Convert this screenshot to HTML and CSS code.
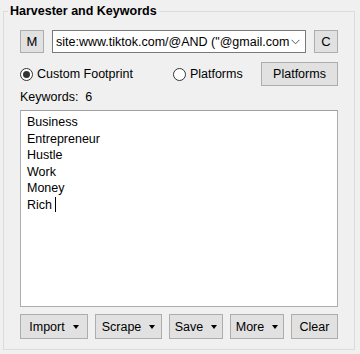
FILE: index.html
```html
<!DOCTYPE html>
<html lang="en">
<head>
  <meta charset="UTF-8">
  <title>Harvester and Keywords</title>
  <link rel="stylesheet" href="styles.css">
</head>
<body>

  <fieldset class="group">
    <legend>Harvester and Keywords</legend>
    <div class="group-body">

      <div class="row query-row">
        <button class="btn small">M</button>
        <div class="combo">
          <span class="combo-text">site:www.tiktok.com/@AND ("@gmail.com"</span>
          <svg class="chevron" width="9" height="6" viewBox="0 0 9 6">
            <path d="M0.5 0.8 L4.5 4.8 L8.5 0.8" fill="none" stroke="#555" stroke-width="1"/>
          </svg>
        </div>
        <button class="btn small">C</button>
      </div>

      <div class="row mode-row">
        <label class="radio checked"><span class="dot"></span>Custom Footprint</label>
        <label class="radio second"><span class="dot"></span>Platforms</label>
        <button class="btn platforms">Platforms</button>
      </div>

      <div class="count">Keywords:&nbsp; 6</div>

      <div class="keywords">
        <div>Business</div>
        <div>Entrepreneur</div>
        <div>Hustle</div>
        <div>Work</div>
        <div>Money</div>
        <div>Rich <span class="caret"></span></div>
      </div>

      <div class="row actions">
        <button class="btn drop w-import">Import <span class="tri"></span></button>
        <button class="btn drop w-scrape">Scrape <span class="tri"></span></button>
        <button class="btn drop w-save">Save <span class="tri"></span></button>
        <button class="btn drop w-more">More <span class="tri"></span></button>
        <button class="btn w-clear">Clear</button>
      </div>

    </div>
  </fieldset>

</body>
</html>
```

FILE: styles.css
```css
body {
  margin: 0;
  background: #f0f0f0;
  font-family: "Liberation Sans", Arial, sans-serif;
  font-size: 12.5px;
  color: #000;
}
.group {
  margin: 4px 5px 0 3px;
  padding: 0;
  border: 1px solid #dcdcdc;
  min-width: 0;
}
.group legend {
  font-weight: bold;
  font-size: 12.5px;
  line-height: 14px;
  margin-left: 4px;
  padding: 0 2px;
}
.group-body {
  padding: 12px 16px 10px 16px;
}
.row {
  display: flex;
  align-items: center;
}
.btn {
  font-family: inherit;
  font-size: 12.5px;
  color: #000;
  background: #e1e1e1;
  border: 1px solid #adadad;
  padding: 0;
  margin: 0;
  box-sizing: border-box;
}
.query-row {
  gap: 8px;
  height: 23px;
}
.btn.small {
  width: 24px;
  height: 23px;
  font-size: 13px;
}
.combo {
  flex: 1;
  min-width: 0;
  height: 23px;
  box-sizing: border-box;
  background: #fff;
  border: 1px solid #7a7a7a;
  display: flex;
  align-items: center;
  padding: 0 5px 0 3px;
}
.combo-text {
  flex: 1;
  min-width: 0;
  white-space: nowrap;
  overflow: hidden;
}
.chevron {
  flex: none;
  margin-left: 2px;
}
.mode-row {
  margin-top: 9px;
  height: 24px;
}
.radio {
  display: flex;
  align-items: center;
  gap: 4px;
}
.radio.second {
  margin-left: 40px;
}
.dot {
  width: 13px;
  height: 13px;
  box-sizing: border-box;
  border: 1px solid #333;
  border-radius: 50%;
  background: #fff;
  position: relative;
}
.radio.checked .dot::after {
  content: "";
  position: absolute;
  left: 2px; top: 2px;
  width: 7px; height: 7px;
  border-radius: 50%;
  background: #333;
}
.btn.platforms {
  margin-left: auto;
  width: 77px;
  height: 24px;
}
.count {
  margin-top: 3px;
  line-height: 16px;
}
.keywords {
  margin-top: 5px;
  height: 197px;
  box-sizing: border-box;
  background: #fff;
  border: 1px solid #abadb3;
  border-top-color: #a0a0a0;
  padding: 3px 6px;
  line-height: 16.6px;
}
.caret {
  display: inline-block;
  width: 1px;
  height: 15px;
  background: #000;
  vertical-align: -3px;
}
.actions {
  margin-top: 7px;
  gap: 7px;
}
.actions .btn {
  height: 25px;
}
.drop {
  display: flex;
  align-items: center;
  justify-content: center;
  gap: 8px;
}
.tri {
  width: 0; height: 0;
  border-left: 3.5px solid transparent;
  border-right: 3.5px solid transparent;
  border-top: 4px solid #000;
}
.w-import { width: 68px; }
.w-scrape { width: 67px; }
.w-save { width: 54px; }
.w-more { width: 54px; }
.w-clear { width: 47px; }
```
